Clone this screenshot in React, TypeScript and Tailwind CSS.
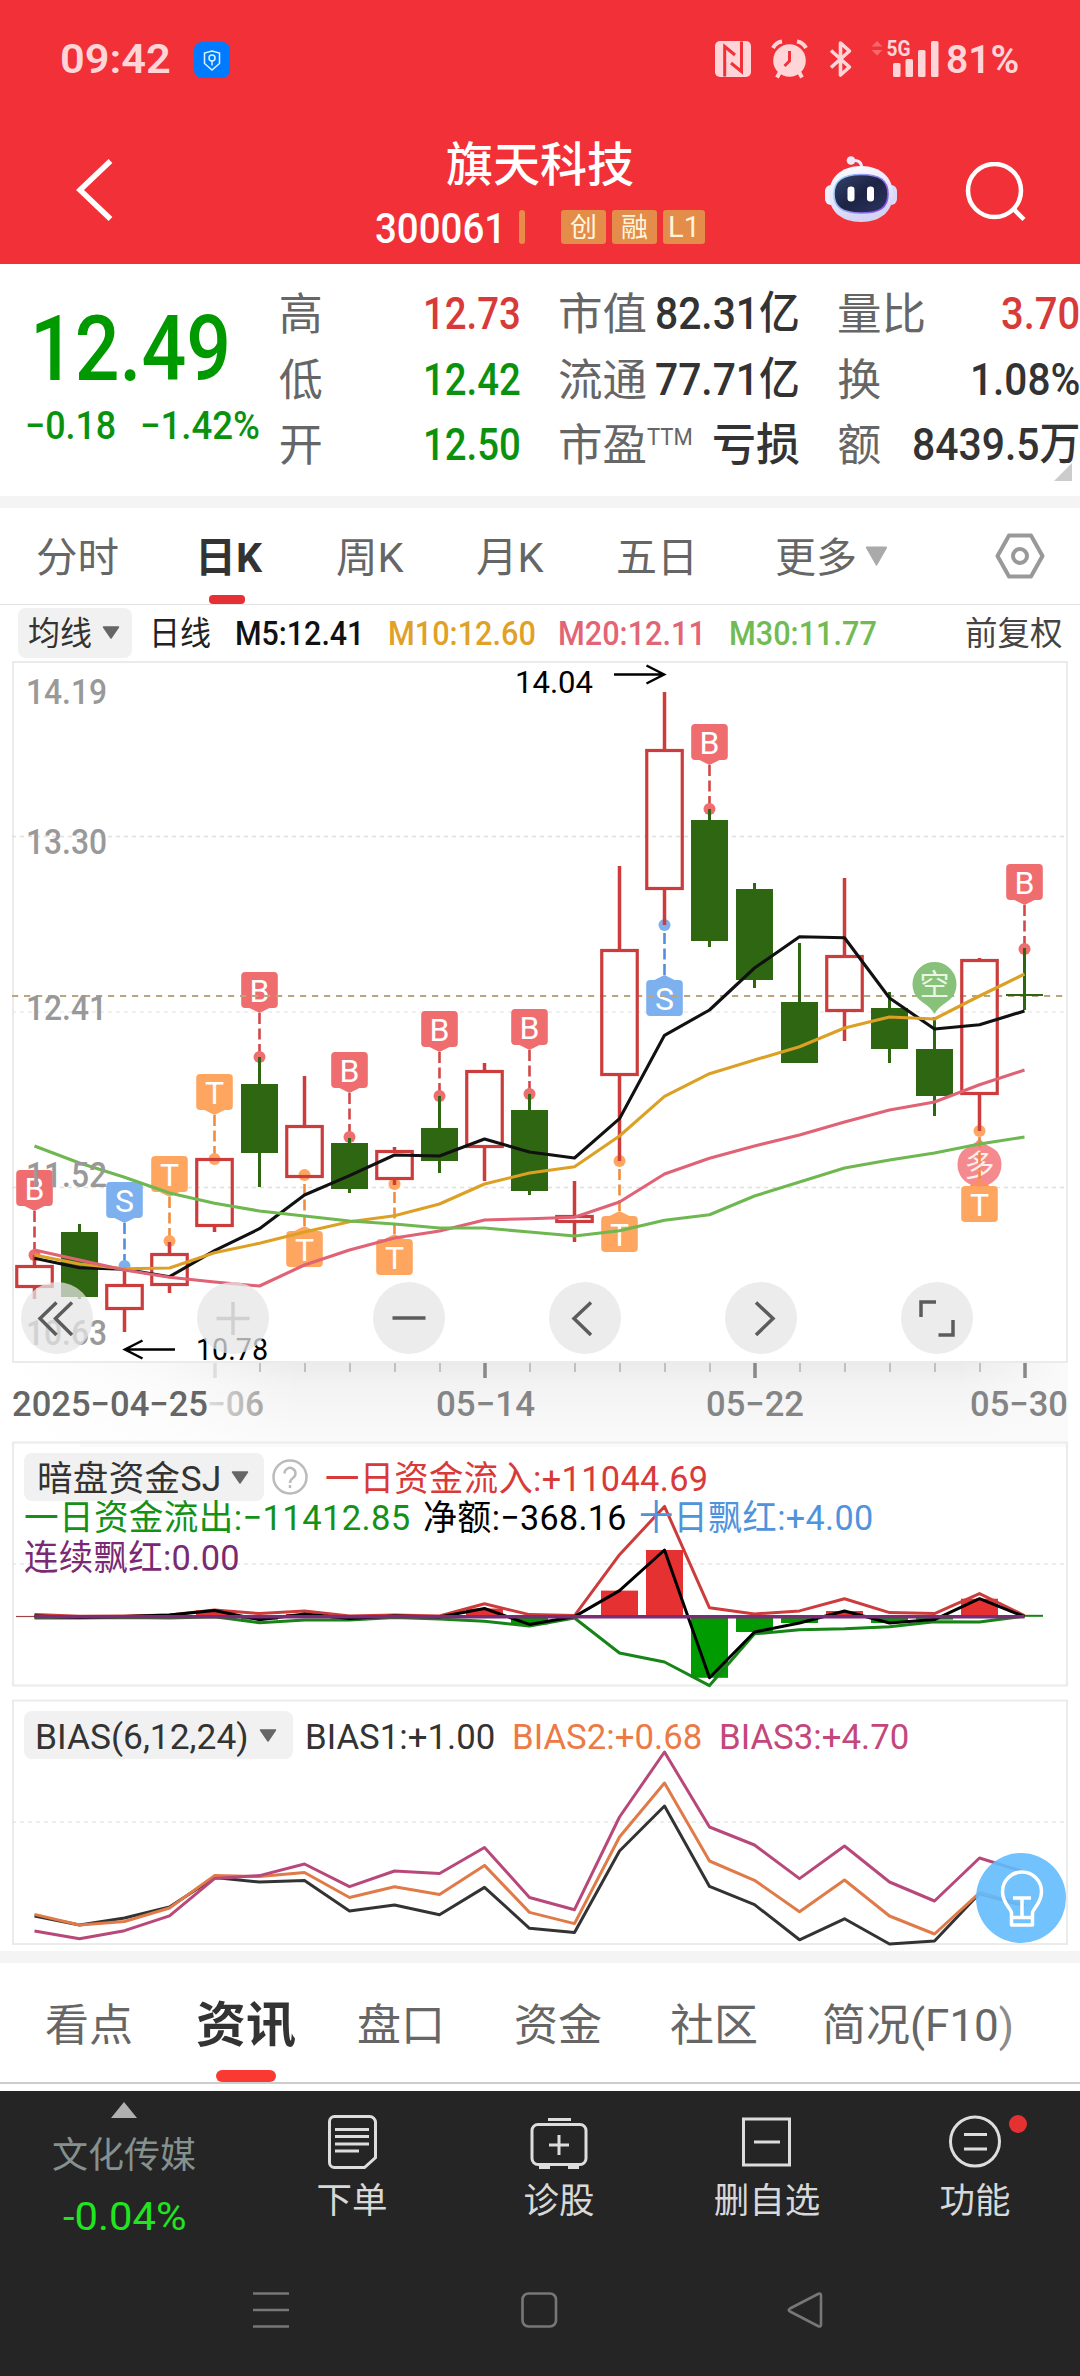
import { useLayoutEffect, useRef, type ReactNode } from "react";

const FONT = "font-[Roboto,'Noto_Sans_CJK_SC',sans-serif]";

/** One line of text, condensed or widened so that it fills the width of its box. */
function Fit({ className = "", children }: { className?: string; children: ReactNode }) {
  const box = useRef<HTMLSpanElement>(null);
  const text = useRef<HTMLSpanElement>(null);
  useLayoutEffect(() => {
    if (!box.current || !text.current) return;
    const k = box.current.clientWidth / text.current.offsetWidth;
    text.current.style.transform = `scaleX(${k})`;
  }, [children]);
  return (
    <span ref={box} className={`block shrink-0 whitespace-nowrap ${className}`}>
      <span ref={text} className="inline-block origin-left align-top">
        {children}
      </span>
    </span>
  );
}

const cx = (i: number) => 34.5 + 45 * i;
const points = (ys: number[]) => ys.map((y, i) => `${cx(i)},${y}`).join(" ");

/* ---------- data ---------- */

type Candle = { up: boolean; h: number; t: number; b: number; l: number };
const c = (up: boolean, h: number, t: number, b: number, l: number): Candle => ({ up, h, t, b, l });

const candles: Candle[] = [
  c(true, 1255, 1265, 1288, 1299),
  c(false, 1224, 1232, 1297, 1299),
  c(true, 1268, 1284, 1310, 1332),
  c(true, 1242, 1253, 1286, 1293),
  c(true, 1158, 1158, 1227, 1232),
  c(false, 1057, 1084, 1153, 1187),
  c(true, 1076, 1125, 1178, 1178),
  c(false, 1138, 1143, 1189, 1193),
  c(true, 1147, 1150, 1180, 1185),
  c(false, 1096, 1128, 1161, 1173),
  c(true, 1063, 1070, 1148, 1181),
  c(false, 1094, 1110, 1191, 1195),
  c(true, 1181, 1215, 1223, 1242),
  c(true, 866, 949, 1076, 1161),
  c(true, 692, 749, 890, 925),
  c(false, 809, 820, 941, 947),
  c(false, 883, 889, 980, 988),
  c(false, 943, 1002, 1063, 1063),
  c(true, 878, 955, 1012, 1041),
  c(false, 992, 1008, 1049, 1063),
  c(false, 1017, 1049, 1096, 1116),
  c(true, 958, 959, 1095, 1131),
  c(false, 948, 994, 996, 1010),
];

const ma5 = [1258.3, 1267.7, 1269.3, 1276.7, 1250.7, 1228.7, 1195, 1175.7, 1155, 1156, 1139, 1152, 1158, 1118.7, 1035.3, 1010, 968, 936.7, 937.7, 998, 1029, 1024.7, 1011];
const ma10 = [1255, 1264, 1268.7, 1268, 1252.7, 1243.3, 1232, 1221.7, 1215.7, 1204, 1184, 1173, 1166.7, 1136, 1096.3, 1073.7, 1060, 1046.7, 1028, 1017, 1019, 996, 974];
const ma20 = [1250, 1260, 1270, 1277.3, 1282, 1286, 1265, 1250, 1238, 1231, 1220, 1218.7, 1217.3, 1202, 1174, 1158.3, 1146, 1135, 1122, 1110, 1102, 1084.7, 1070];
const ma30 = [1146, 1163, 1177.3, 1193, 1203.3, 1211, 1216, 1221, 1224, 1228, 1228, 1232, 1236, 1230.7, 1220.3, 1214.7, 1196, 1182, 1168, 1160, 1153, 1144, 1137];

type Tag = { i: number; k: "B" | "S" | "T"; y: number; dot: number };
const tags: Tag[] = [
  { i: 0, k: "B", y: 1170, dot: 1255 },
  { i: 2, k: "S", y: 1182, dot: 1266 },
  { i: 3, k: "T", y: 1156, dot: 1241 },
  { i: 4, k: "T", y: 1074, dot: 1159 },
  { i: 5, k: "B", y: 972, dot: 1057 },
  { i: 6, k: "T", y: 1231, dot: 1175 },
  { i: 7, k: "B", y: 1052, dot: 1137 },
  { i: 8, k: "T", y: 1239, dot: 1184 },
  { i: 9, k: "B", y: 1011, dot: 1096 },
  { i: 11, k: "B", y: 1009, dot: 1094 },
  { i: 13, k: "T", y: 1216, dot: 1161 },
  { i: 14, k: "S", y: 980, dot: 925 },
  { i: 15, k: "B", y: 724, dot: 809 },
  { i: 21, k: "T", y: 1186, dot: 1131 },
  { i: 22, k: "B", y: 864, dot: 949 },
];
const tagFill = { B: "#ef6d6f", S: "#7db0ef", T: "#fea65f" };
const tagLine = { B: "#d04848", S: "#4f8fdc", T: "#f08c3c" };

const inflow = [1614.6, 1616.3, 1616, 1615, 1610, 1613.6, 1611, 1616, 1615, 1616, 1603.8, 1614.6, 1615.6, 1554.7, 1506.4, 1607.8, 1614, 1610.9, 1598.7, 1612.6, 1613.6, 1593.6, 1615.6];
const outflow = [1618, 1618, 1617.5, 1618, 1616.8, 1622.7, 1620, 1620, 1617.5, 1619, 1621.3, 1626, 1618, 1653, 1662, 1685.6, 1633.8, 1629.8, 1628.8, 1626.8, 1621.7, 1622, 1616];
const net = [1616, 1617.5, 1616.5, 1615, 1610.5, 1619.7, 1614, 1618.6, 1616, 1617, 1608.5, 1624.4, 1616.6, 1590.6, 1550, 1677.8, 1632, 1623, 1611, 1623, 1619.6, 1598.7, 1616.6];

const bias1 = [1916, 1925, 1918, 1907, 1877.6, 1882, 1880.6, 1911, 1905, 1914.8, 1887.4, 1928.3, 1932.4, 1851, 1806, 1886.4, 1904.6, 1939.8, 1918.8, 1944, 1941, 1893.5, 1905.6];
const bias2 = [1914.4, 1925, 1921.5, 1908, 1875.6, 1876.6, 1872.5, 1897.5, 1886.7, 1894.5, 1865.4, 1912.4, 1923.6, 1837, 1783, 1861, 1880.3, 1911.7, 1880, 1916, 1934, 1892.8, 1905];
const bias3 = [1931, 1938.8, 1930.7, 1915.8, 1878.6, 1875.6, 1864, 1886.7, 1871, 1873.5, 1847.5, 1897.5, 1909.7, 1817, 1752, 1827, 1845, 1878.6, 1846, 1882, 1901, 1858, 1872];

/* ---------- header ---------- */

function StatusIcons() {
  return (
    <svg width="230" height="50" viewBox="712 32 230 50" fill="#ffd5d7">
      <rect x="715" y="41" width="36" height="36" rx="5" />
      <path d="M724.700 76.500V46.500L735 55M741.500 41.500V71.500L731 63" fill="none" stroke="#f23037" strokeWidth="3" />
      <circle cx="789.500" cy="60.500" r="16.300" />
      <path d="M773 48a12 12 0 0 1 9-6.500M806 48a12 12 0 0 0-9-6.500" fill="none" stroke="#ffd5d7" strokeWidth="4" />
      <path d="M780 72l-3 5.500M799 72l3 5.500" fill="none" stroke="#ffd5d7" strokeWidth="4" />
      <path d="M789.500 51v10l-5 5" fill="none" stroke="#f23037" strokeWidth="3" />
      <path d="M831 50.500l18.500 16.500-9 8V43l9 8L831 67.500" fill="none" stroke="#ffd5d7" strokeWidth="3.600" strokeLinejoin="round" />
      <path d="M877 41l5.500 5.500h-11zM877 55.500l5.500-5.500h-11z" fill="#f9676c" />
      <text x="886.500" y="56" fontSize="21.500" fontWeight="700" textLength="24" lengthAdjust="spacingAndGlyphs">5G</text>
      <rect x="893" y="63" width="7.500" height="14" rx="1.500" />
      <rect x="905.500" y="59" width="7.500" height="18" rx="1.500" />
      <rect x="918" y="50" width="7.500" height="27" rx="1.500" />
      <rect x="931" y="41" width="7.500" height="36" rx="1.500" />
    </svg>
  );
}

function Robot() {
  return (
    <svg width="74" height="70" viewBox="0 0 74 70">
      <defs>
        <linearGradient id="shell" x1="0" y1="0" x2="0.300" y2="1">
          <stop offset="0" stopColor="#ffffff" />
          <stop offset="0.600" stopColor="#e4e6fb" />
          <stop offset="1" stopColor="#d3d3f4" />
        </linearGradient>
        <linearGradient id="rim" x1="0" y1="0" x2="1" y2="0.400">
          <stop offset="0" stopColor="#9fe0ff" />
          <stop offset="1" stopColor="#8d55e8" />
        </linearGradient>
        <linearGradient id="visor" x1="0" y1="0" x2="1" y2="1">
          <stop offset="0" stopColor="#35426b" />
          <stop offset="0.500" stopColor="#1c2444" />
          <stop offset="1" stopColor="#2c3560" />
        </linearGradient>
      </defs>
      <path d="M27 7c7-2 11 1 11 9" fill="none" stroke="#ece9fa" strokeWidth="3" />
      <circle cx="27" cy="6.500" r="4.300" fill="#ece9fa" />
      <rect x="1" y="31" width="12" height="20" rx="6" fill="#eef0ff" />
      <rect x="61" y="31" width="12" height="20" rx="6" fill="#d9d9f8" />
      <path d="M37 12c20 0 32 12 32 28 0 17-12 28-32 28S5 57 5 40c0-16 12-28 32-28z" fill="url(#shell)" />
      <path d="M37 20.500c19 0 27 6 27 19.500S56 59 37 59 10 53 10 40s8-19.500 27-19.500z" fill="url(#visor)" stroke="url(#rim)" strokeWidth="1.600" />
      <rect x="23.500" y="32.500" width="7" height="15" rx="3.300" fill="#fff" />
      <rect x="43" y="32.500" width="7" height="15" rx="3.300" fill="#fff" />
    </svg>
  );
}

function Header() {
  return (
    <header className="h-[264px] bg-[#f23037] text-white">
      <div className="flex h-[118px] items-start pl-[60px] pt-[34px] text-[#ffd5d7]">
        <Fit className="w-[111px] text-[41px] leading-[51px] font-semibold">09:42</Fit>
        <span className="mt-2 ml-[23px] flex size-9 items-center justify-center rounded-lg bg-[#007bff]">
          <svg width="18" height="21" viewBox="0 0 18 21" fill="none" stroke="#d9f4ff" strokeWidth="1.500">
            <path d="M9 1l7.500 2v10.500L9 20l-7.500-6.500V3z" />
            <circle cx="9" cy="8" r="3" />
            <path d="M9 11v4.500" />
          </svg>
        </span>
        <div className="-mt-[2px] ml-[482px]">
          <StatusIcons />
        </div>
        <Fit className="ml-1 w-[73px] text-[39px] leading-[52px] font-semibold">81%</Fit>
      </div>
      <div className="flex h-[146px]">
        <svg className="mt-[36px] ml-[72px] shrink-0" width="44" height="72" viewBox="72 154 44 72" fill="none" stroke="#fff" strokeWidth="5.500">
          <path d="M110.500 161L80 190l30.500 29" />
        </svg>
        <div className="ml-[259px] w-[332px]">
          <Fit className="ml-[71px] mt-[20px] w-[188px] text-[47px] leading-[54px] font-medium">旗天科技</Fit>
          <div className="mt-[15px] flex items-center">
            <Fit className="h-10 w-[131px] text-[42px] leading-[44px] font-medium">300061</Fit>
            <span className="ml-[13px] h-[34px] w-[6px] rounded-sm bg-[#e88c4a]" />
            <span className="ml-[36px] h-[34px] w-[45px] rounded-[3px] bg-[#e48c49] text-center text-[27px] leading-[36px] text-[#fff5dc]">创</span>
            <span className="ml-[6px] h-[34px] w-[45px] rounded-[3px] bg-[#e48c49] text-center text-[27px] leading-[36px] text-[#fff5dc]">融</span>
            <span className="ml-[6px] h-[34px] w-[42px] rounded-[3px] bg-[#e48c49] text-center text-[29px] leading-[35px] text-[#fff5dc]">L1</span>
          </div>
        </div>
        <div className="mt-[36px] ml-[117px]">
          <Robot />
        </div>
        <svg className="mt-[44px] ml-[64px]" width="64" height="64" viewBox="962 162 64 64" fill="none" stroke="#fff" strokeWidth="4.500">
          <circle cx="994.500" cy="190.500" r="26.500" />
          <path d="M1013.500 209l10.500 10.500" />
        </svg>
      </div>
    </header>
  );
}

/* ---------- quote ---------- */

function QuoteRow({ children }: { children: ReactNode }) {
  return <div className="flex h-[65.5px] justify-between text-[45px] leading-[67px]">{children}</div>;
}

function Quote() {
  const label = "text-[44px] leading-[70px] text-[#666]";
  return (
    <section className="relative flex h-[232px] bg-white pt-4">
      <div className="w-[279px] text-[#090]">
        <Fit className="mt-[20px] ml-[30px] w-[201px] text-[91px] leading-[99px] font-medium">12.49</Fit>
        <div className="mt-[2px] flex text-[39px] leading-[51px] text-[#0a920f]">
          <Fit className="ml-[25px] w-[91px] font-medium">−0.18</Fit>
          <Fit className="ml-[24px] w-[120px] font-medium">−1.42%</Fit>
        </div>
      </div>
      <div className="w-[243px]">
        <QuoteRow>
          <span className={label}>高</span>
          <Fit className="w-[98px] font-medium text-[#d83a3a]">12.73</Fit>
        </QuoteRow>
        <QuoteRow>
          <span className={label}>低</span>
          <Fit className="w-[98px] font-medium text-[#0a920f]">12.42</Fit>
        </QuoteRow>
        <QuoteRow>
          <span className={label}>开</span>
          <Fit className="w-[98px] font-medium text-[#0a920f]">12.50</Fit>
        </QuoteRow>
      </div>
      <div className="ml-[37px] w-[242px] text-[#333]">
        <QuoteRow>
          <Fit className={`w-[89px] ${label}`}>市值</Fit>
          <Fit className="w-[145px] font-medium">82.31亿</Fit>
        </QuoteRow>
        <QuoteRow>
          <Fit className={`w-[89px] ${label}`}>流通</Fit>
          <Fit className="w-[145px] font-medium">77.71亿</Fit>
        </QuoteRow>
        <QuoteRow>
          <div className="flex">
            <Fit className={`w-[89px] ${label}`}>市盈</Fit>
            <Fit className="h-[52px] w-[46px] text-[24px] leading-[53px] text-[#666]">TTM</Fit>
          </div>
          <Fit className="w-[88px] leading-[69px] font-medium">亏损</Fit>
        </QuoteRow>
      </div>
      <div className="ml-[37px] w-[243px] text-[#333]">
        <QuoteRow>
          <Fit className={`w-[89px] ${label}`}>量比</Fit>
          <Fit className="w-[79px] font-medium text-[#d83a3a]">3.70</Fit>
        </QuoteRow>
        <QuoteRow>
          <span className={label}>换</span>
          <Fit className="w-[110px] font-medium">1.08%</Fit>
        </QuoteRow>
        <QuoteRow>
          <span className={label}>额</span>
          <Fit className="w-[168px] font-medium">8439.5万</Fit>
        </QuoteRow>
      </div>
      <svg className="absolute right-2 bottom-[15px]" width="18" height="18" viewBox="0 0 18 18">
        <path d="M18 0v18H0z" fill="#ccc" />
      </svg>
    </section>
  );
}

/* ---------- period tabs ---------- */

function Down({ className = "", w = 18, h = 13, fill = "#666" }: { className?: string; w?: number; h?: number; fill?: string }) {
  return (
    <svg className={`shrink-0 ${className}`} width={w} height={h} viewBox="0 0 18 13" preserveAspectRatio="none">
      <path d="M1.500 1h15L9 12z" fill={fill} stroke={fill} strokeWidth="1.500" strokeLinejoin="round" />
    </svg>
  );
}

function PeriodTabs() {
  return (
    <nav className="flex h-[97px] items-start border-b border-[#e3e3e3] bg-white text-[41px] leading-[101px] text-[#666]">
      <Fit className="ml-[36px] w-[83px]">分时</Fit>
      <div className="relative ml-[76px] h-[96px]">
        <Fit className="w-[67px] font-bold text-[#333]">日K</Fit>
        <span className="absolute bottom-0 left-[14px] h-[9px] w-[36px] rounded-[4px] bg-[#e53134]" />
      </div>
      <Fit className="ml-[74px] w-[68px]">周K</Fit>
      <Fit className="ml-[72px] w-[68px]">月K</Fit>
      <Fit className="ml-[72px] w-[82px]">五日</Fit>
      <Fit className="ml-[77px] w-[82px]">更多</Fit>
      <Down className="ml-[8px] self-center" w={23} h={20} fill="#aaa" />
      <svg className="ml-[106px] self-center" width="52" height="52" viewBox="0 0 52 52" fill="none" stroke="#999" strokeWidth="4" strokeLinejoin="round">
        <path d="M15 5.500h22l11.500 20.500L37 46.500H15L3.500 26z" />
        <circle cx="26" cy="26" r="7" />
      </svg>
    </nav>
  );
}

function MaRow() {
  return (
    <div className="flex h-[55px] items-center bg-white text-[32.5px] leading-[52px] [&_span]:pt-[1.5px]">
      <div className="ml-[18px] flex h-[50px] w-[114px] items-center rounded-lg bg-[#f1f1f1] pl-[10px] text-[#333]">
        <Fit className="w-[64px]">均线</Fit>
        <Down className="ml-[10px]" />
      </div>
      <Fit className="ml-[17px] w-[62px] text-[#222]">日线</Fit>
      <Fit className="ml-[24px] w-[129px] font-medium text-[#111]">M5:12.41</Fit>
      <Fit className="ml-[24px] w-[148px] font-medium text-[#dfa127]">M10:12.60</Fit>
      <Fit className="ml-[22px] w-[148px] font-medium text-[#e26475]">M20:12.11</Fit>
      <Fit className="ml-[23px] w-[148px] font-medium text-[#70bb52]">M30:11.77</Fit>
      <Fit className="ml-[88px] w-[98px] text-[#444]">前复权</Fit>
    </div>
  );
}

/* ---------- main chart ---------- */

function CandleShape({ d, i }: { d: Candle; i: number }) {
  const x = cx(i);
  if (!d.up)
    return (
      <g fill="#2f6612">
        <rect x={x - 1.5} y={d.h} width="3" height={d.l - d.h} />
        <rect x={x - 18.5} y={d.t} width="37" height={d.b - d.t} />
      </g>
    );
  return (
    <g fill="#cd3c3c">
      {d.h < d.t && <rect x={x - 1.75} y={d.h} width="3.500" height={d.t - d.h} />}
      {d.l > d.b && <rect x={x - 1.75} y={d.b} width="3.500" height={d.l - d.b} />}
      <rect x={x - 17.75} y={d.t + 1.5} width="35.500" height={d.b - d.t - 3} fill="none" stroke="#cd3c3c" strokeWidth="3.200" />
    </g>
  );
}

function TagShape({ t }: { t: Tag }) {
  const x = cx(t.i);
  const above = t.dot > t.y;
  const edge = above ? t.y + 36 : t.y;
  const tip = above ? edge + 5 : edge - 5;
  return (
    <g>
      <line x1={x} x2={x} y1={tip} y2={t.dot} stroke="#fff" strokeWidth="3" />
      <line x1={x} x2={x} y1={tip} y2={t.dot} stroke={tagLine[t.k]} strokeWidth="2.600" strokeDasharray="11 4.500" />
      <path d={`M${x - 10} ${edge}L${x} ${tip}L${x + 10} ${edge}z`} fill={tagFill[t.k]} />
      <rect x={x - 18.3} y={t.y} width="36.600" height="36" rx="4" fill={tagFill[t.k]} />
      <text x={x} y={t.y + 29.5} fontSize="32" fill="#fff" textAnchor="middle">{t.k}</text>
      <circle cx={x} cy={t.dot} r="6" fill={tagFill[t.k]} />
    </g>
  );
}

function Price({ x, y, w, size = 35, fill = "#999", weight = 500, children }: { x: number; y: number; w: number; size?: number; fill?: string; weight?: number; children: string }) {
  return (
    <text x={x} y={y} fontSize={size} fontWeight={weight} fill={fill} textLength={w} lengthAdjust="spacingAndGlyphs">
      {children}
    </text>
  );
}

function MainChart() {
  const line = { fill: "none", strokeWidth: 3.1, strokeLinejoin: "round" as const };
  return (
    <section className="relative h-[780px] bg-white">
      <svg className="block" width="1080" height="780" viewBox="0 660 1080 780">
        <defs>
          <linearGradient id="axisShade" x1="0" y1="1363" x2="0" y2="1440" gradientUnits="userSpaceOnUse">
            <stop offset="0" stopColor="#ebebeb" />
            <stop offset="0.300" stopColor="#f3f3f3" />
            <stop offset="1" stopColor="#fafafa" />
          </linearGradient>
          <linearGradient id="leftFade" x1="12" y1="0" x2="300" y2="0" gradientUnits="userSpaceOnUse">
            <stop offset="0" stopColor="#fff" />
            <stop offset="0.500" stopColor="#fff" stopOpacity="0.700" />
            <stop offset="1" stopColor="#fff" stopOpacity="0" />
          </linearGradient>
          <linearGradient id="rightFade" x1="960" y1="0" x2="1068" y2="0" gradientUnits="userSpaceOnUse">
            <stop offset="0" stopColor="#fafafa" stopOpacity="0" />
            <stop offset="1" stopColor="#fafafa" />
          </linearGradient>
          <linearGradient id="dateFade" x1="205" y1="0" x2="290" y2="0" gradientUnits="userSpaceOnUse">
            <stop offset="0" stopColor="#888" stopOpacity="0.220" />
            <stop offset="1" stopColor="#888" stopOpacity="0.950" />
          </linearGradient>
        </defs>

        <rect x="12" y="1363" width="1056" height="77" fill="url(#axisShade)" />
        <rect x="12" y="1363" width="288" height="77" fill="url(#leftFade)" />
        <rect x="960" y="1363" width="108" height="77" fill="url(#rightFade)" />

        <rect x="13" y="662" width="1054" height="700" fill="#fff" stroke="#ebebeb" strokeWidth="2" />
        <g stroke="#e0e0e0" strokeWidth="1.500" strokeDasharray="4 4">
          <path d="M12 836.500H1066" />
          <path d="M12 1012H1066" stroke="#ececec" />
          <path d="M12 1187.500H1066" />
        </g>

        {tags.map((t) => (
          <TagShape key={`${t.i}${t.k}`} t={t} />
        ))}
        <path d="M12 996H1066" stroke="#b8a680" strokeWidth="1.800" strokeDasharray="6.200 5.800" />

        <path d="M916 996a22 22 0 1 1 37 0c-5 7-14 9-18.500 18-4.500-9-13.500-11-18.500-18z" fill="#88c17a" />
        <text x="934.500" y="995" fontSize="30" fill="#e9f6e4" textAnchor="middle">空</text>
        <path d="M961.500 1152a22 22 0 1 0 36 0c-5-6-14-6-18-15-4 9-13 9-18 15z" fill="#f58a8e" />
        <text x="979.500" y="1176" fontSize="30" fill="#fdeeee" textAnchor="middle">多</text>
        <path d="M979.500 1137v45" stroke="#ee8848" strokeWidth="2.600" strokeDasharray="11 4.500" />
        <path d="M969.500 1186l10-6 10 6z" fill="#fc9058" />

        {candles.map((d, i) => (
          <CandleShape key={i} d={d} i={i} />
        ))}

        <polyline {...line} points={points(ma5)} stroke="#111" />
        <polyline {...line} points={points(ma10)} stroke="#dba024" />
        <polyline {...line} points={points(ma20)} stroke="#e06275" />
        <polyline {...line} points={points(ma30)} stroke="#6fb750" />

        <Price x={26} y={704} w={81}>14.19</Price>
        <Price x={26} y={854} w={81}>13.30</Price>
        <Price x={26} y={1020} w={81}>12.41</Price>
        <Price x={26} y={1187} w={81}>11.52</Price>
        <Price x={26} y={1345} w={81}>10.63</Price>
        <Price x={515} y={692.5} w={78} size={31} fill="#000" weight={400}>14.04</Price>
        <Price x={196} y={1359.5} w={72} size={31} fill="#000" weight={400}>10.78</Price>
        <path d="M614 674.500H664M646.500 665.500L664 674.500L646.500 683.500" fill="none" stroke="#000" strokeWidth="2.500" />
        <path d="M175 1349.500H125M142.500 1340.500L125 1349.500L142.500 1358.500" fill="none" stroke="#000" strokeWidth="2.500" />

        {candles.map((_, i) => {
          if (i < 4) return null;
          const major = (i - 4) % 6 === 0;
          return (
            <rect
              key={i}
              x={cx(i) + 0.5 - (major ? 1.75 : 1)}
              y="1363"
              width={major ? 3.5 : 2}
              height={major ? 15 : 9}
              fill={i === 4 ? "#ddd" : major ? "#888" : "#c0c0c0"}
            />
          );
        })}
        <Price x={207} y={1416} w={57} fill="url(#dateFade)">−06</Price>
        <Price x={12} y={1416} w={196} fill="#666">2025−04−25</Price>
        <Price x={436} y={1416} w={99} fill="#858585">05−14</Price>
        <Price x={706} y={1416} w={98} fill="#858585">05−22</Price>
        <Price x={970} y={1416} w={98} fill="#858585">05−30</Price>
      </svg>

      <div className="absolute top-[622px] left-[21px] flex gap-[104px]">
        {[
          <path key="a" d="M35.500 20.500L19 36.500l16.500 16.500M51 20.500L34.500 36.500 51 53" />,
          <path key="b" d="M36 20v33M19.500 36.500h33" stroke="#d0d0d0" />,
          <path key="c" d="M19.500 36h33" />,
          <path key="d" d="M42 20.500L25 36.500l17 16.500" />,
          <path key="e" d="M31 20.500l17 16-17 16.500" />,
          <path key="f" d="M35 20H20v15M52 38v15H37.500" />,
        ].map((icon, i) => (
          <svg key={i} width="72" height="72" viewBox="0 0 72 72" fill="none" stroke="#5c5c5c" strokeWidth="3.500">
            <circle cx="36" cy="36" r="36" fill="#e5e5e5" fillOpacity="0.740" stroke="none" />
            {icon}
          </svg>
        ))}
      </div>
    </section>
  );
}

/* ---------- money flow ---------- */

function FlowPanel() {
  const line = { fill: "none", strokeWidth: 3, strokeLinejoin: "round" as const };
  return (
    <section className="relative h-[252px] bg-white">
      <svg className="block" width="1080" height="252" viewBox="0 1440 1080 252">
        <rect x="80" y="1440" width="988" height="7" fill="#fafafa" />
        <rect x="13" y="1442.500" width="1054" height="243" fill="none" stroke="#ebebeb" strokeWidth="2" />
        <path d="M12 1564H1066" stroke="#e8e8e8" strokeWidth="1.700" strokeDasharray="4 4" />
        {net.map((y, i) => (
          <rect
            key={i}
            x={cx(i) - 18.5}
            y={Math.min(y, 1616.5)}
            width="37"
            height={Math.abs(y - 1616.5)}
            fill={y < 1616.5 ? "#e63133" : "#009b00"}
          />
        ))}
        <path d="M16 1616.500H36" stroke="#a04545" strokeWidth="1.200" />
        <path d="M1020 1615.800H1043" stroke="#178417" strokeWidth="2" />
        <polyline {...line} points={points(inflow)} stroke="#cd3c3c" />
        <polyline {...line} points={points(outflow)} stroke="#178417" />
        <polyline {...line} points={points(net)} stroke="#000" />
        <path d="M34.500 1616.700H1024.500" stroke="#7c2c76" strokeWidth="3.400" />
      </svg>
      <div className="absolute top-[13px] left-[24px] text-[35.5px] tracking-[0.01em]">
        <div className="flex h-12 items-center leading-[50px] [&_span]:pt-[1.5px]">
          <div className="flex h-12 w-[240px] items-center rounded-lg bg-[#f1f1f1] pl-[13px] text-[#333]">
            <Fit className="w-[185px]">暗盘资金SJ</Fit>
            <Down className="ml-[9px]" />
          </div>
          <svg className="ml-2" width="36" height="36" viewBox="0 0 36 36" fill="none" stroke="#bbb" strokeWidth="2.500">
            <circle cx="18" cy="18" r="16.500" />
            <path d="M12.500 14.500a5.500 5.500 0 1 1 8.500 4.500c-2 1.300-3 2.200-3 5" />
            <path d="M18 26v3" />
          </svg>
          <Fit className="ml-[17px] w-[383px] text-[#d83a3a]">一日资金流入:+11044.69</Fit>
        </div>
        <div className="-mt-[3px] flex h-10 items-center leading-[42px]">
          <Fit className="w-[387px] text-[#15911a]">一日资金流出:−11412.85</Fit>
          <Fit className="ml-[12px] w-[204px] text-black">净额:−368.16</Fit>
          <Fit className="ml-[12px] w-[235px] text-[#4f93dd]">十日飘红:+4.00</Fit>
        </div>
        <Fit className="h-10 w-[216px] leading-[41px] text-[#7a2a73]">连续飘红:0.00</Fit>
      </div>
    </section>
  );
}

/* ---------- BIAS ---------- */

function BiasPanel() {
  const line = { fill: "none", strokeWidth: 3, strokeLinejoin: "round" as const };
  return (
    <section className="relative h-[259px] bg-white">
      <svg className="block" width="1080" height="259" viewBox="0 1692 1080 259">
        <rect x="13" y="1700.500" width="1054" height="243.500" fill="none" stroke="#ebebeb" strokeWidth="2" />
        <path d="M12 1822H1066" stroke="#e8e8e8" strokeWidth="1.700" strokeDasharray="4 4" />
        <polyline {...line} points={points(bias1)} stroke="#333" />
        <polyline {...line} points={points(bias2)} stroke="#e07a48" />
        <polyline {...line} points={points(bias3)} stroke="#b8487a" />
      </svg>
      <div className="absolute top-[19px] left-[24px] flex h-12 items-center text-[35.5px] leading-[50px] [&_span]:pt-[1.5px]">
        <div className="flex h-12 w-[269px] items-center rounded-lg bg-[#f1f1f1] pl-[11px] text-[#333]">
          <Fit className="w-[214px]">BIAS(6,12,24)</Fit>
          <Down className="ml-[10px]" />
        </div>
        <Fit className="ml-[12px] w-[190px] text-[#333]">BIAS1:+1.00</Fit>
        <Fit className="ml-[17px] w-[190px] text-[#ec7a46]">BIAS2:+0.68</Fit>
        <Fit className="ml-[17px] w-[190px] text-[#c4477b]">BIAS3:+4.70</Fit>
      </div>
      <svg className="absolute top-[161px] left-[976px]" width="90" height="90" viewBox="0 0 90 90" fill="none" stroke="#fff" strokeWidth="3.500" strokeLinejoin="round">
        <circle cx="45" cy="45" r="45" fill="#62bbfd" fillOpacity="0.900" stroke="none" />
        <path d="M35.500 72V60c0-4-9-9.500-9-21.500a19.500 19.500 0 0 1 39 0c0 12-9 17.500-9 21.500v12z" />
        <path d="M35.500 64.500h21M37 45h18M46 45v19" />
      </svg>
    </section>
  );
}

/* ---------- bottom ---------- */

function InfoTabs() {
  return (
    <nav className="flex h-[121px] items-start border-b-2 border-[#ccc] bg-white text-[44px] leading-[126px] text-[#666]">
      <Fit className="ml-[45px] w-[88px]">看点</Fit>
      <div className="relative ml-[63px] h-[119px]">
        <Fit className="w-[100px] text-[49px] font-bold text-[#333]">资讯</Fit>
        <span className="absolute bottom-0 left-[20px] h-3 w-[60px] rounded-[6px] bg-[#fa3a32]" />
      </div>
      <Fit className="ml-[61px] w-[88px]">盘口</Fit>
      <Fit className="ml-[69px] w-[88px]">资金</Fit>
      <Fit className="ml-[68px] w-[88px]">社区</Fit>
      <Fit className="ml-[64px] w-[192px]">
        简况(F10<span className="text-[#8c8c8c]">)</span>
      </Fit>
    </nav>
  );
}

function ToolItem({ icon, label }: { icon: ReactNode; label: string }) {
  return (
    <div className="flex w-[120px] flex-col items-center">
      <svg width="64" height="60" viewBox="0 0 64 60" fill="none" stroke="#ddd" strokeWidth="3">
        {icon}
      </svg>
      <span className="mt-[8px] text-[35.5px] leading-[44px] text-[#d8d8d8]">{label}</span>
    </div>
  );
}

function Toolbar() {
  return (
    <footer className="h-[285px] bg-[#252525]">
      <div className="flex h-[175px] pt-[20px]">
        <div className="-mt-[9px] ml-[44px] mr-[88px] flex w-[160px] flex-col items-center">
          <svg width="26" height="16" viewBox="0 0 26 16">
            <path d="M13 0l13 16H0z" fill="#b0b0b0" />
          </svg>
          <span className="mt-[15px] text-[36px] leading-[46px] text-[#84918f]">文化传媒</span>
          <Fit className="mt-[15px] w-[123px] text-[38px] leading-[46px] text-[#1fe61f]">-0.04%</Fit>
        </div>
        <ToolItem
          label="下单"
          icon={
            <>
              <path d="M14.500 5.500h35a6 6 0 0 1 6 6V46.500L44.500 56.500H14.500a5 5 0 0 1-5-5V10.500a5 5 0 0 1 5-5" />
              <path d="M15 18.500h34M15 25.500h34M15 33h34M15 40h24" />
            </>
          }
        />
        <div className="ml-[87px]">
          <ToolItem
            label="诊股"
            icon={
              <>
                <rect x="5" y="13.500" width="54" height="40" rx="6" />
                <path d="M21 8.500h23M32 24v20M22 34h20" />
                <path d="M12 56h11M41 56h11" strokeWidth="4" />
              </>
            }
          />
        </div>
        <div className="ml-[88px]">
          <ToolItem
            label="删自选"
            icon={
              <>
                <rect x="8.500" y="8" width="46" height="46" />
                <path d="M19 31h26" />
              </>
            }
          />
        </div>
        <div className="relative ml-[88px]">
          <ToolItem
            label="功能"
            icon={
              <>
                <circle cx="32" cy="30.500" r="24.500" />
                <path d="M21 23.500h23M21 38h23" />
              </>
            }
          />
          <span className="absolute top-[4px] left-[94px] size-[18px] rounded-full bg-[#e63133]" />
        </div>
      </div>
      <svg className="ml-[240px] mt-[20px]" width="600" height="50" viewBox="240 2286 600 50" fill="none" stroke="#777" strokeWidth="2.600" strokeLinejoin="round">
        <path d="M253 2293.500h36M253 2310h36M253 2326.500h36" />
        <rect x="522.500" y="2293.500" width="33.500" height="33" rx="6" />
        <path d="M821 2295.500v29q0 3-3 1.500l-28-14.500q-2.500-1.500 0-3l28-14.500q3-1.500 3 1.500z" />
      </svg>
    </footer>
  );
}

export default function App() {
  return (
    <main className={`h-[2376px] w-[1080px] overflow-hidden bg-white ${FONT}`}>
      <Header />
      <Quote />
      <div className="h-3 bg-[#f4f4f4]" />
      <PeriodTabs />
      <MaRow />
      <MainChart />
      <FlowPanel />
      <BiasPanel />
      <div className="h-3 bg-[#f4f4f4]" />
      <InfoTabs />
      <div className="h-[7px] bg-white" />
      <Toolbar />
    </main>
  );
}
